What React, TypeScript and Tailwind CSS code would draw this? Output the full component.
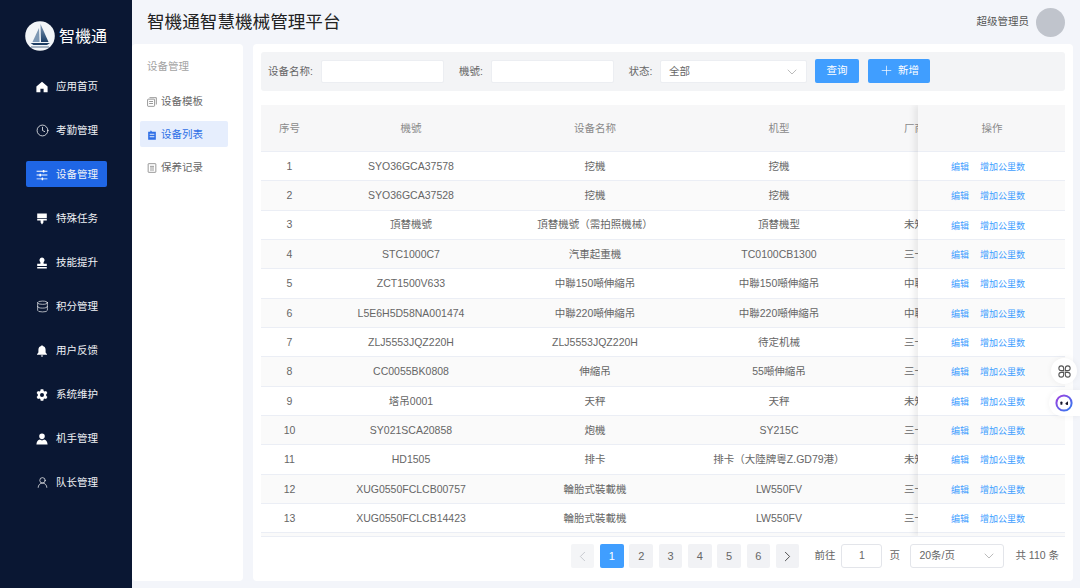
import React from "react"
import { ChevronDown, ChevronLeft, ChevronRight, Clock, Database, Plus, UserRound } from "lucide-react"

const FONT = "[font-family:'Liberation_Sans','Noto_Sans_CJK_SC',sans-serif]"

const HomeIcon = () => (
  <svg viewBox="0 0 12 12" className="w-[12px] h-[12px]" fill="currentColor">
    <path d="M6 .8 11.6 5.6V11.2H7.6V7.8H4.4V11.2H.4V5.6Z" />
  </svg>
)
const SlidersIcon = () => (
  <svg viewBox="0 0 12 12" className="w-[12px] h-[12px]" fill="currentColor">
    <path d="M.6 1.8H11.4V2.7H.6ZM.6 5.6H11.4V6.5H.6ZM.6 9.4H11.4V10.3H.6Z" />
    <rect x="6.8" y="0.9" width="1.6" height="2.7" rx="0.4" />
    <rect x="3.4" y="4.7" width="1.6" height="2.7" rx="0.4" />
    <rect x="5.6" y="8.5" width="1.6" height="2.7" rx="0.4" />
  </svg>
)
const BrushIcon = () => (
  <svg viewBox="0 0 12 12" className="w-[12px] h-[12px]" fill="currentColor">
    <path d="M1.2.6H10.8V5.2H1.2ZM1.2 6H10.8V7.6H7.4V9.4L6 11.6 4.6 9.4V7.6H1.2Z" />
  </svg>
)
const StampIcon = () => (
  <svg viewBox="0 0 12 12" className="w-[12px] h-[12px]" fill="currentColor">
    <path d="M6 .6A2.6 2.6 0 0 1 7.6 5.2V6.8H10.8V9H1.2V6.8H4.4V5.2A2.6 2.6 0 0 1 6 .6ZM1.2 10H10.8V11.4H1.2Z" />
  </svg>
)
const BellIcon = () => (
  <svg viewBox="0 0 12 12" className="w-[12px] h-[12px]" fill="currentColor">
    <path d="M6 .3C6.5.3 6.8.6 6.8 1.1 8.6 1.5 9.6 3 9.6 4.8V7.6L11 9.2V9.8H1V9.2L2.4 7.6V4.8C2.4 3 3.4 1.5 5.2 1.1 5.2.6 5.5.3 6 .3ZM4.8 10.4H7.2A1.2 1.2 0 0 1 4.8 10.4Z" />
  </svg>
)
const GearIcon = () => (
  <svg viewBox="0 0 12 12" className="w-[12px] h-[12px]" fill="currentColor">
    <path
      fillRule="evenodd"
      d="M4.7.3H7.3L7.7 1.9 8.5 2.4 10.1 1.9 11.4 4.1 10.2 5.3V6.7L11.4 7.9 10.1 10.1 8.5 9.6 7.7 10.1 7.3 11.7H4.7L4.3 10.1 3.5 9.6 1.9 10.1.6 7.9 1.8 6.7V5.3L.6 4.1 1.9 1.9 3.5 2.4 4.3 1.9ZM6 4A2 2 0 1 0 6 8 2 2 0 1 0 6 4Z"
    />
  </svg>
)
const PersonIcon = () => (
  <svg viewBox="0 0 12 12" className="w-[12px] h-[12px]" fill="currentColor">
    <path d="M6 .4A2.8 2.8 0 0 1 8.8 3.2C8.8 4.8 7.6 6.2 6 6.2S3.2 4.8 3.2 3.2A2.8 2.8 0 0 1 6 .4ZM3.8 6.4 6 7.6 8.2 6.4C10 6.8 11.4 8.2 11.6 11.4H.4C.6 8.2 2 6.8 3.8 6.4Z" />
  </svg>
)

const Logo = () => (
  <svg viewBox="0 0 30 30" className="w-[30px] h-[30px]">
    <defs>
      <linearGradient id="sail" x1="0" y1="0" x2="0" y2="1">
        <stop offset="0" stopColor="#7f9ab5" />
        <stop offset="1" stopColor="#1c3e66" />
      </linearGradient>
    </defs>
    <circle cx="15" cy="15" r="14.8" fill="#f2f5f8" />
    <path d="M15.5 3 23.5 21H16Z" fill="url(#sail)" />
    <path d="M14 7 14.6 21H7.5Z" fill="#7d98b4" />
    <path d="M5.5 22H25L22 24H8.5Z" fill="#1d3d63" />
    <rect x="6" y="25.4" width="18" height="1.2" fill="#3c5878" opacity="0.7" />
  </svg>
)

const NAV = [
  { label: "应用首页", icon: <HomeIcon /> },
  { label: "考勤管理", icon: <Clock size={13} strokeWidth={1.4} /> },
  { label: "设备管理", icon: <SlidersIcon />, active: true },
  { label: "特殊任务", icon: <BrushIcon /> },
  { label: "技能提升", icon: <StampIcon /> },
  { label: "积分管理", icon: <Database size={13} strokeWidth={1.2} /> },
  { label: "用户反馈", icon: <BellIcon /> },
  { label: "系统维护", icon: <GearIcon /> },
  { label: "机手管理", icon: <PersonIcon /> },
  { label: "队长管理", icon: <UserRound size={13} strokeWidth={1.3} /> },
]

const ROWS = [
  ["1", "SYO36GCA37578", "挖機", "挖機", ""],
  ["2", "SYO36GCA37528", "挖機", "挖機", ""],
  ["3", "頂替機號", "頂替機號（需拍照機械）", "頂替機型", "未知"],
  ["4", "STC1000C7", "汽車起重機", "TC0100CB1300", "三一"],
  ["5", "ZCT1500V633", "中聯150噸伸縮吊", "中聯150噸伸縮吊", "中聯"],
  ["6", "L5E6H5D58NA001474", "中聯220噸伸縮吊", "中聯220噸伸縮吊", "中聯"],
  ["7", "ZLJ5553JQZ220H", "ZLJ5553JQZ220H", "待定机械", "三一"],
  ["8", "CC0055BK0808", "伸縮吊", "55噸伸縮吊", "三一"],
  ["9", "塔吊0001", "天秤", "天秤", "未知"],
  ["10", "SY021SCA20858", "炮機", "SY215C", "三一"],
  ["11", "HD1505", "排卡", "排卡（大陸牌粵Z.GD79港）", "未知"],
  ["12", "XUG0550FCLCB00757", "輪胎式裝載機", "LW550FV", "三一"],
  ["13", "XUG0550FCLCB14423", "輪胎式裝載機", "LW550FV", "三一"],
  ["14", "", "", "", ""],
]

const Sidebar = () => (
  <aside className="w-[132px] shrink-0 bg-[#0a1733] flex flex-col">
    <div className="h-[64px] pt-[21px] pl-[25px] flex items-start gap-[4px]">
      <Logo />
      <span className="text-[16px] leading-[30px] text-white mt-[1px]">智機通</span>
    </div>
    <nav className="flex flex-col gap-[18px] w-[81px] ml-[26px] mt-[9px]">
      {NAV.map((item) => (
        <div
          key={item.label}
          className={`h-[26px] flex items-center pl-[10px] pt-[1px] rounded-[2px] text-[10.5px] text-[#f0f2f6] ${item.active ? "bg-[#1f66e5]" : ""}`}
        >
          <span className="w-[20px] flex items-center text-white">{item.icon}</span>
          {item.label}
        </div>
      ))}
    </nav>
  </aside>
)

const SubNav = () => (
  <div className="w-[111px] shrink-0 bg-white rounded-[4px] flex flex-col px-[8px] pt-[15px] text-[10.5px] text-[#666]">
    <div className="pl-[7px] h-[14px] leading-[14px] text-[#a3a3a3]">设备管理</div>
    <div className="flex items-center gap-[4px] pl-[7px] pt-[1px] h-[26px] mt-[15px]">
      <svg viewBox="0 0 12 12" className="w-[10px] h-[10px]" fill="none" stroke="#777" strokeWidth="0.9">
        <rect x="0.7" y="2.6" width="8.4" height="8.6" rx="0.8" />
        <path d="M3 .8H11.2V9M2.6 5.4H7.2M2.6 7.8H7.2" />
      </svg>
      设备模板
    </div>
    <div className="flex items-center gap-[4px] pl-[7px] pt-[1px] h-[26px] mt-[7px] w-[88px] bg-[#e6eefd] rounded-[2px] text-[#2e6fe6]">
      <svg viewBox="0 0 12 12" className="w-[10px] h-[10px]" fill="#2e6fe6">
        <path d="M4.6.4 3.8 2H1.4V11.6H10.6V2H6ZM3.2 4.4H8.8V5.6H3.2ZM3.2 7.4H8.8V8.6H3.2Z" fillRule="evenodd" />
      </svg>
      设备列表
    </div>
    <div className="flex items-center gap-[4px] pl-[7px] pt-[1px] h-[26px] mt-[7px]">
      <svg viewBox="0 0 12 12" className="w-[10px] h-[10px]" fill="none" stroke="#777" strokeWidth="0.9">
        <rect x="1.4" y="0.8" width="9.2" height="10.4" rx="0.6" />
        <path d="M3.6 4H8.4M3.6 6H8.4M3.6 8.4H8.4" />
      </svg>
      保养记录
    </div>
  </div>
)

const Filters = () => (
  <div className="h-[39px] bg-[#f3f4f6] rounded-[3px] flex items-center pl-[7px] text-[10.5px] text-[#666]">
    <span className="w-[53px]">设备名称:</span>
    <div className="w-[123px] h-[23px] bg-white rounded-[2px] border border-[#eceef2]" />
    <span className="ml-[15px] w-[32px]">機號:</span>
    <div className="w-[123px] h-[23px] bg-white rounded-[2px] border border-[#eceef2]" />
    <span className="ml-[14.5px] w-[31.5px]">状态:</span>
    <div className="w-[147px] h-[23px] bg-white rounded-[2px] border border-[#eceef2] flex items-center justify-between pl-[8px] pr-[6px]">
      全部
      <ChevronDown size={16} strokeWidth={1} className="text-[#999]" />
    </div>
    <button className="ml-[8px] w-[44px] h-[24px] -mt-[2px] bg-[#409eff] rounded-[2px] text-white text-[10.5px]">查询</button>
    <button className="ml-[9px] w-[62px] h-[24px] -mt-[2px] bg-[#409eff] rounded-[2px] text-white text-[10.5px] flex items-center justify-center gap-[4px]">
      <Plus size={15} strokeWidth={1.1} />
      新增
    </button>
  </div>
)

const Table = () => (
  <div className="mt-[14px] h-[432px] flex overflow-hidden border-b border-[#ebeef5] text-[10.5px] text-[#666]">
    {/* scrolling columns, cut off by the fixed one */}
    <div className="flex-1 min-w-0 overflow-hidden">
      <div className="w-[800px]">
        <div className="h-[47px] pt-[1px] bg-[#f7f7f8] flex items-center text-[#8a8a8a] border-b border-[#ebeef5]">
          <span className="w-[57px] text-center">序号</span>
          <span className="w-[186px] text-center">機號</span>
          <span className="w-[182px] text-center">设备名称</span>
          <span className="w-[186px] text-center">机型</span>
          <span className="pl-[32px]">厂商</span>
        </div>
        {ROWS.map((r, i) => (
          <div key={r[0]} className={`h-[29.35px] pt-[1px] flex items-center border-b border-[#ebeef5] ${i % 2 ? "bg-[#fafafa]" : "bg-white"}`}>
            <span className="w-[57px] text-center">{r[0]}</span>
            <span className="w-[186px] text-center">{r[1]}</span>
            <span className="w-[182px] text-center">{r[2]}</span>
            <span className="w-[186px] text-center">{r[3]}</span>
            <span className="pl-[32px]">{r[4]}</span>
          </div>
        ))}
      </div>
    </div>
    <div className="w-[147px] shrink-0 shadow-[-4px_0_6px_rgba(0,0,0,0.07)] z-10">
      <div className="h-[47px] pt-[1px] pl-[1px] bg-[#f7f7f8] flex items-center justify-center text-[#8a8a8a] border-b border-[#ebeef5]">操作</div>
      {ROWS.map((r, i) => (
        <div
          key={r[0]}
          className={`h-[29.35px] flex items-center gap-[11px] pt-[3px] pl-[33px] border-b border-[#ebeef5] text-[9px] text-[#409eff] ${i % 2 ? "bg-[#fafafa]" : "bg-white"}`}
        >
          {r[1] && <span>编辑</span>}
          {r[1] && <span>增加公里数</span>}
        </div>
      ))}
    </div>
  </div>
)

const Pager = () => (
  <div className="h-[38px] flex items-center justify-end pr-[14px] text-[10.5px] text-[#666]">
    <div className="flex gap-[5.8px] text-[11px]">
      <span className="w-[23.5px] h-[24px] bg-[#f4f5f7] rounded-[2px] flex items-center justify-center text-[#b5b8bf]">
        <ChevronLeft size={17} strokeWidth={1} />
      </span>
      {["1", "2", "3", "4", "5", "6"].map((p) => (
        <span
          key={p}
          className={`w-[23.5px] h-[24px] rounded-[2px] flex items-center justify-center ${p === "1" ? "bg-[#409eff] text-white" : "bg-[#f1f2f5]"}`}
        >
          {p}
        </span>
      ))}
      <span className="w-[23.5px] h-[24px] bg-[#f1f2f5] rounded-[2px] flex items-center justify-center text-[#333]">
        <ChevronRight size={17} strokeWidth={1.2} />
      </span>
    </div>
    <span className="ml-[15px]">前往</span>
    <div className="ml-[6px] w-[41px] h-[24px] border border-[#e3e5ea] rounded-[3px] flex items-center justify-center">1</div>
    <span className="ml-[7px]">页</span>
    <div className="ml-[10.5px] w-[94px] h-[24px] border border-[#e3e5ea] rounded-[3px] flex items-center justify-between pl-[8px] pr-[6px]">
      20条/页
      <ChevronDown size={16} strokeWidth={1} className="text-[#999]" />
    </div>
    <span className="ml-[11px]">共 110 条</span>
  </div>
)

const Floating = () => (
  <>
    <div className="absolute z-20 left-[1051px] top-[358px] w-[26px] h-[26px] rounded-full bg-white shadow-[0_0_6px_rgba(0,0,0,0.06)] flex items-center justify-center">
      <svg viewBox="0 0 12 12" className="w-[13px] h-[13px]" fill="none" stroke="#555" strokeWidth="1">
        <path d="M5.2 5.2H3A2.2 2.2 0 1 1 5.2 3ZM6.8 5.2V3A2.2 2.2 0 1 1 9 5.2ZM5.2 6.8V9A2.2 2.2 0 1 1 3 6.8ZM6.8 6.8H9A2.2 2.2 0 1 1 6.8 9Z" />
      </svg>
    </div>
    <div className="absolute z-20 left-[1049px] top-[390px] w-[31px] h-[26px] rounded-l-full bg-white shadow-[0_0_6px_rgba(0,0,0,0.06)] flex items-center pl-[6px]">
      <svg viewBox="0 0 18 18" className="w-[18px] h-[18px]">
        <defs>
          <linearGradient id="ring" x1="0" y1="0" x2="1" y2="1">
            <stop offset="0" stopColor="#a03fe0" />
            <stop offset="1" stopColor="#2f7bf0" />
          </linearGradient>
        </defs>
        <circle cx="9" cy="9" r="7.6" fill="#fff" stroke="url(#ring)" strokeWidth="2" />
        <rect x="5.4" y="7.4" width="2" height="3.4" rx="0.9" fill="#15152b" />
        <path d="M13 7.2V10.8A2 2 0 0 1 10.4 9.2Z" fill="#15152b" />
      </svg>
    </div>
  </>
)

export default function App() {
  return (
    <div className={`relative w-[1080px] h-[588px] overflow-hidden flex bg-[#f3f5fa] ${FONT}`}>
      <Sidebar />
      <div className="flex-1 min-w-0 flex flex-col">
        <header className="h-[44px] shrink-0 flex items-center justify-between pl-[15px] pr-[15px]">
          <h1 className="text-[17.6px] text-[#222] font-normal">智機通智慧機械管理平台</h1>
          <div className="flex items-center gap-[7px] text-[10.5px] text-[#555]">
            超级管理员
            <span className="w-[29px] h-[29px] rounded-full bg-[#c0c4cc]" />
          </div>
        </header>
        <div className="h-[537px] flex gap-[10px] pr-[7px]">
          <SubNav />
          <main className="flex-1 min-w-0 bg-white rounded-[4px] px-[8px] pt-[8px]">
            <Filters />
            <Table />
            <div className="-mx-[8px]">
              <Pager />
            </div>
          </main>
        </div>
      </div>
      <Floating />
    </div>
  )
}
